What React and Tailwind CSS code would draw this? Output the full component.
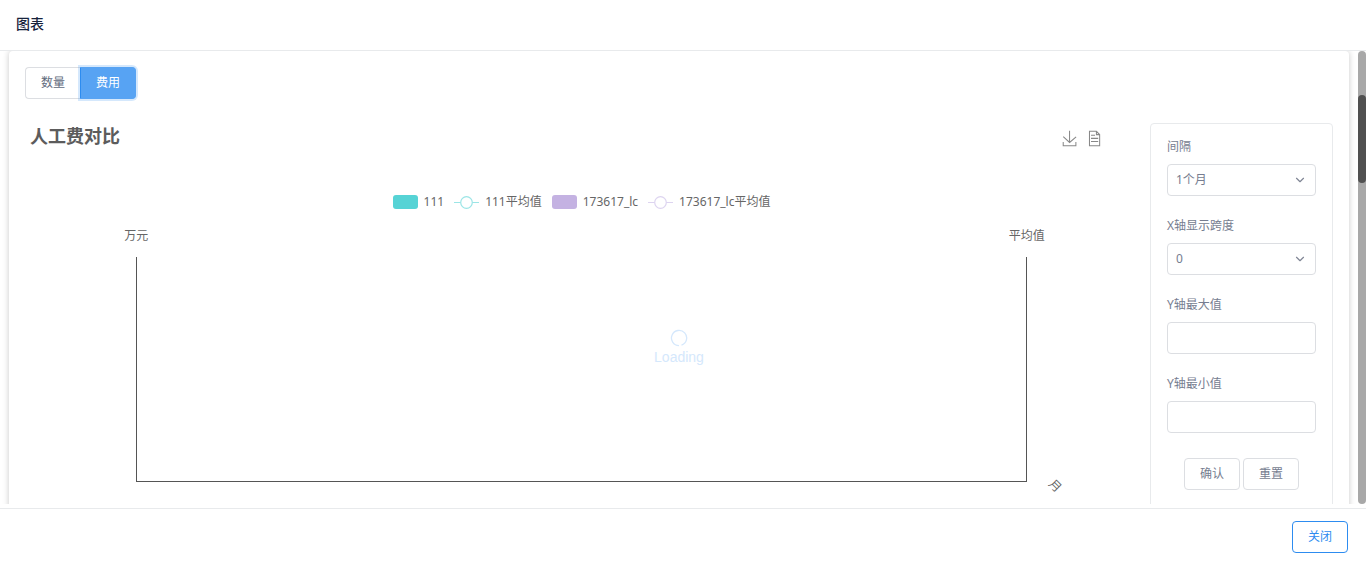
import React from "react";
import { ChevronDown } from "lucide-react";

const plainButton =
  "h-8 rounded border border-[#dcdee2] bg-white px-[15px] text-xs leading-4 text-[#767d90]";
const fieldBox =
  "h-8 w-full appearance-none rounded border border-[#dcdee2] bg-white px-2 text-xs leading-4 text-[#767d90]";

function Field({ id, label, children }) {
  return (
    <div className="flex flex-col gap-[7px]">
      <label htmlFor={id} className="h-5 text-xs leading-5 text-[#767d90]">
        {label}
      </label>
      {children}
    </div>
  );
}

function SelectField({ id, label, options }) {
  return (
    <Field id={id} label={label}>
      <div className="relative">
        <select id={id} className={fieldBox}>
          {options.map((o) => (
            <option key={o}>{o}</option>
          ))}
        </select>
        <ChevronDown
          size={14}
          className="pointer-events-none absolute top-[9px] right-[9px] text-[#808695]"
        />
      </div>
    </Field>
  );
}

function BarKey({ color, label }) {
  return (
    <span className="flex items-center gap-[6px]">
      <svg width="25" height="14" viewBox="0 0 25 14">
        <rect width="25" height="14" rx="3" fill={color} />
      </svg>
      {label}
    </span>
  );
}

function LineKey({ color, label }) {
  return (
    <span className="flex items-center gap-[6px]">
      <svg width="25" height="14" viewBox="0 0 25 14" fill="none" stroke={color}>
        <path d="M0 7.5H25" />
        <circle cx="12.5" cy="7.5" r="5.8" fill="#fff" strokeWidth="1.2" />
      </svg>
      {label}
    </span>
  );
}

function Chart() {
  return (
    <section className="relative min-w-0 flex-1 text-xs text-[#666]">
      <div className="flex items-start justify-between pr-[35px] pl-[5px]">
        <h2 className="text-lg leading-[26px] font-bold text-[#5c5c5c]">人工费对比</h2>
        <div className="flex gap-2 pt-[7px]">
          <button aria-label="保存为图片">
            <svg width="17" height="17" viewBox="-4 -3 66 66" fill="none" stroke="#888" strokeWidth="4">
              <path d="M4.7,22.9L29.3,45.5L54.7,23.4M4.6,43.6L4.6,58L53.8,58L53.8,43.6M29.2,45.1L29.2,0" />
            </svg>
          </button>
          <button aria-label="数据视图">
            <svg width="17" height="17" viewBox="-2 -3 66 66" fill="none" stroke="#888" strokeWidth="4">
              <path d="M17.5,17.3H33M45.4,29.5h-28M11.5,2v56H51V14.8L38.4,2H11.5zM38.4,2.2v12.7H51M45.4,41.7h-28" />
            </svg>
          </button>
        </div>
      </div>
      <div className="mt-[43px] flex h-5 items-center justify-center gap-[10px] leading-5">
        <BarKey color="#56d3d5" label="111" />
        <LineKey color="#9be5e6" label="111平均值" />
        <BarKey color="#c4b2e2" label="173617_lc" />
        <LineKey color="#ddd4f0" label="173617_lc平均值" />
      </div>
      <div className="mx-[10%] mt-[14px] leading-5">
        <div className="-mr-[18px] -ml-3 flex justify-between">
          <span>万元</span>
          <span>平均值</span>
        </div>
      </div>
      <div className="mt-[11px] flex items-end">
        <div className="w-[10%]" />
        <div className="h-[225px] flex-1 border-x border-b border-[#555]" />
        <div className="w-[10%] pl-5">
          <span className="-mb-3 block h-4 w-4 rotate-45 text-center leading-4">月</span>
        </div>
      </div>
    </section>
  );
}

export default function App() {
  return (
    <div
      className="flex h-screen flex-col overflow-hidden bg-white"
      style={{ fontFamily: '"Noto Sans", "Noto Sans CJK SC", sans-serif' }}
    >
      <header className="flex h-[51px] shrink-0 items-center border-b border-[#e8eaec] px-4 pb-[2px]">
        <h1 className="text-sm leading-5 font-medium text-[#17233d]">图表</h1>
      </header>
      <main className="mb-1 flex min-h-0 flex-1 overflow-hidden">
        <div className="min-w-0 flex-1 overflow-hidden px-[9px]">
          <div className="relative min-h-[200%] rounded bg-white p-4 shadow-[0_0_6px_rgba(0,0,0,0.22)]">
            <div className="flex">
              <button className="h-8 rounded-l border border-r-0 border-[#dcdee2] bg-white px-[15px] text-xs text-[#616a7d]">
                数量
              </button>
              <button className="h-8 rounded-r border border-[#57a3f3] border-l-[#2d8cf0] bg-[#57a3f3] px-[15px] text-xs text-white shadow-[0_0_0_2px_rgba(45,140,240,0.2)]">
                费用
              </button>
            </div>
            <div className="mt-6 flex items-start gap-3">
              <Chart />
              <form className="flex w-[183px] shrink-0 flex-col gap-5 rounded border border-[#e8eaec] px-4 pt-[13px] pb-8">
                <SelectField id="interval" label="间隔" options={["1个月"]} />
                <SelectField id="span" label="X轴显示跨度" options={["0"]} />
                <Field id="ymax" label="Y轴最大值">
                  <input id="ymax" className={fieldBox} />
                </Field>
                <Field id="ymin" label="Y轴最小值">
                  <input id="ymin" className={fieldBox} />
                </Field>
                <div className="flex justify-center gap-[3px] pt-[5px]">
                  <button type="button" className={plainButton}>确认</button>
                  <button type="button" className={plainButton}>重置</button>
                </div>
              </form>
            </div>
            <div className="pointer-events-none absolute inset-x-0 top-[278px] flex flex-col items-center text-[#d5e8fc]">
              <svg width="18" height="18" viewBox="0 0 18 18" fill="none" stroke="currentColor" strokeWidth="1.3">
                <path d="M11.5 16.2A7.6 7.6 0 1 0 9 16.6" />
              </svg>
              <span className="font-['Liberation_Sans'] text-sm leading-5">Loading</span>
            </div>
          </div>
        </div>
        <div className="w-2 shrink-0 rounded bg-[#a8a8a8] pt-11">
          <div className="h-[88px] rounded bg-[#505050]" />
        </div>
      </main>
      <footer className="flex h-[57px] shrink-0 items-center justify-end border-t border-[#e8eaec] pr-[18px]">
        <button className="h-8 rounded border border-[#2d8cf0] bg-white px-[15px] text-xs text-[#2d8cf0]">关闭</button>
      </footer>
    </div>
  );
}
